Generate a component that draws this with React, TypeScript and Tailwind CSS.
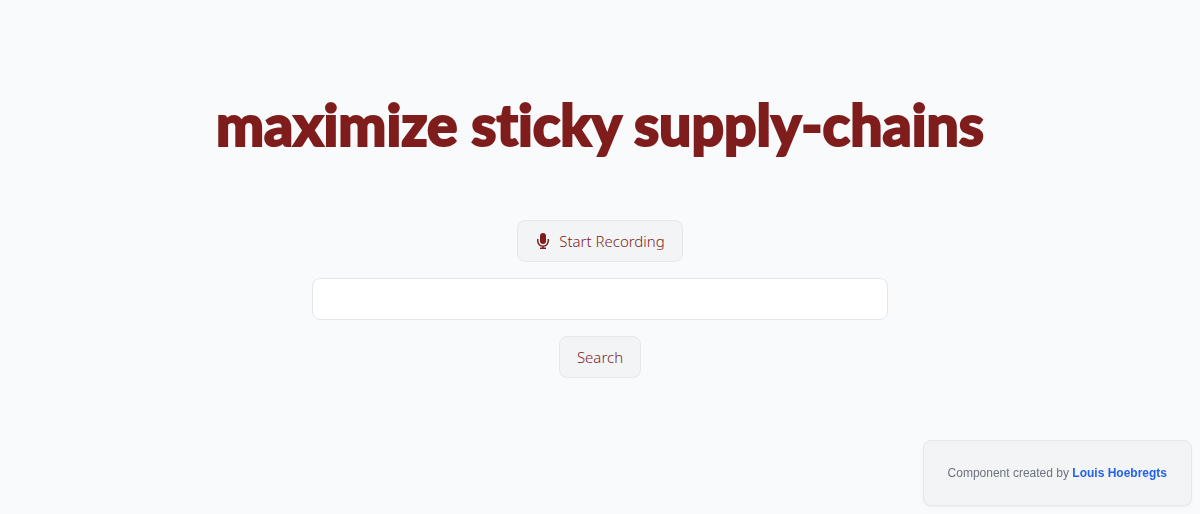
export default function App() {
  return (
    <div className="flex min-h-screen flex-col items-center bg-[#f9fafb] px-4 pt-[88px] font-['Noto_Sans','Open_Sans',sans-serif] text-[15px] font-light text-[#7f1d1d]">
      <h1 className="mb-[60px] text-center font-['Lato',cursive] text-[57px] leading-[72px] font-black [font-variant-ligatures:none] [-webkit-text-stroke:2px_#7f1d1d] [stroke-linejoin:round]">
        maximize sticky supply-chains
      </h1>
      <form className="flex w-full max-w-xl flex-col items-center gap-4" onSubmit={(e) => e.preventDefault()}>
        <button type="button" className="flex h-[42px] items-center gap-2 rounded-lg border border-[#e5e7eb] bg-[#f3f4f6] px-[17px]">
          <svg viewBox="0 0 16 16" fill="currentColor" className="size-4" aria-hidden="true">
            <rect x="5" y="0" width="6" height="11" rx="3" />
            <path d="M2.75 6v2a5.25 5.25 0 0 0 10.5 0V6M8 13v3M5 15.25h6" fill="none" stroke="currentColor" strokeWidth="1.5" />
          </svg>
          Start Recording
        </button>
        <input type="text" aria-label="Search text" className="h-[42px] w-full rounded-lg border border-[#e5e7eb] bg-white px-4" />
        <button type="submit" className="h-[42px] rounded-lg border border-[#e5e7eb] bg-[#f3f4f6] px-[17px]">Search</button>
      </form>
      <footer className="fixed right-2 bottom-2 rounded-lg border border-[#e5e7eb] bg-[#f3f4f6] p-6 font-['Liberation_Sans',sans-serif] text-xs font-normal text-[#6b7280] shadow-[0_1px_2px_0_rgb(0_0_0/0.05)]">
        Component created by <a href="#" className="font-bold text-[#2563eb]">Louis Hoebregts</a>
      </footer>
    </div>
  );
}
